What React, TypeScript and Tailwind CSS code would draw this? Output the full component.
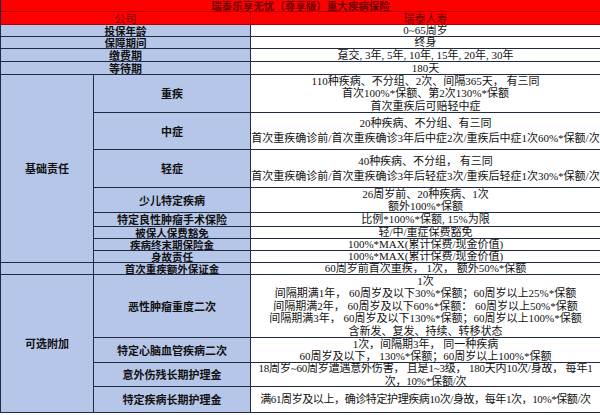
import React from "react";

const label = "flex items-center justify-center bg-[#b6c6e8] border-r border-b border-[#1f2a44] font-bold text-[11px] leading-[11px] text-[#111] whitespace-nowrap";
const small = "flex items-center justify-center bg-[#b6c6e8] border-r border-b border-[#1f2a44] font-bold text-[10.5px] leading-[10px] text-[#111] whitespace-nowrap";
const value = "flex flex-col items-center justify-center bg-white border-r border-b border-[#1f2a44] text-[11px] leading-[12.5px] text-[#111] whitespace-nowrap overflow-hidden text-center";
const serif = { fontFamily: '"Liberation Serif", "Noto Sans CJK SC", serif' };

function Val({ lines, className = "" }: { lines: string[]; className?: string }) {
  return (
    <div className={`${value} ${className}`} style={serif}>
      {lines.map((l, i) => (
        <span key={i}>{l}</span>
      ))}
    </div>
  );
}

export default function App() {
  return (
    <div className="w-[600px] h-[415px] bg-white" style={{ fontFamily: '"Noto Sans CJK SC", sans-serif' }}>
      <div className="grid grid-cols-[93px_157px_350px] grid-rows-[12px_13px_12px_12px_13px_13px_38px_37px_38px_25px_14px_12px_12px_12px_12px_63px_25px_24px_26px] border-l border-[#1f2a44]">
        {/* title */}
        <div className="col-span-3 flex items-center justify-center bg-[#ff0000] border-b border-r border-[#b00000] text-[10.5px] leading-[10px] font-bold text-[#6b0000]">
          瑞泰乐享无忧（尊享版）重大疾病保险
        </div>
        <div className="col-span-2 flex items-center justify-center bg-[#ff0000] border-b border-r border-[#b00000] text-[11px] leading-[11px] text-[#6b0000]">
          公司
        </div>
        <div className="flex items-center justify-center bg-[#ff0000] border-b border-r border-[#b00000] text-[11px] leading-[11px] text-[#6b0000]">
          瑞泰人寿
        </div>

        <div className={`col-span-2 ${small}`}>投保年龄</div>
        <Val className="leading-[10px]" lines={["0~65周岁"]} />
        <div className={`col-span-2 ${small}`}>保障期间</div>
        <Val className="leading-[10px]" lines={["终身"]} />
        <div className={`col-span-2 ${label}`}>缴费期</div>
        <Val className="leading-[11px]" lines={["趸交, 3年, 5年, 10年, 15年, 20年, 30年"]} />
        <div className={`col-span-2 ${label}`}>等待期</div>
        <Val className="leading-[11px]" lines={["180天"]} />

        {/* 基础责任 */}
        <div className={`row-span-8 ${label}`}>基础责任</div>
        <div className={label}>重疾</div>
        <Val lines={["110种疾病、不分组、2次、间隔365天， 有三同", "首次100%*保额、第2次130%*保额", "首次重疾后可赔轻中症"]} />
        <div className={label}>中症</div>
        <Val className="leading-[15px]" lines={["20种疾病、不分组、有三同", "首次重疾确诊前/首次重疾确诊3年后中症2次/重疾后中症1次60%*保额/次"]} />
        <div className={label}>轻症</div>
        <Val className="leading-[15px]" lines={["40种疾病、不分组， 有三同", "首次重疾确诊前/首次重疾确诊3年后轻症3次/重疾后轻症1次30%*保额/次"]} />
        <div className={label}>少儿特定疾病</div>
        <Val lines={["26周岁前、20种疾病、1次", "额外100%*保额"]} />
        <div className={label}>特定良性肿瘤手术保险</div>
        <Val className="leading-[11px]" lines={["比例*100%*保额, 15%为限"]} />
        <div className={small}>被保人保费豁免</div>
        <Val className="leading-[10px]" lines={["轻/中/重症保费豁免"]} />
        <div className={small}>疾病终末期保险金</div>
        <Val className="leading-[10px]" lines={["100%*MAX(累计保费/现金价值)"]} />
        <div className={small}>身故责任</div>
        <Val className="leading-[10px]" lines={["100%*MAX(累计保费/现金价值)"]} />

        <div className={label}></div>
        <div className={small}>首次重疾额外保证金</div>
        <Val className="leading-[10px]" lines={["60周岁前首次重疾， 1次， 额外50%*保额"]} />

        {/* 可选附加 */}
        <div className={`row-span-4 ${label}`}>可选附加</div>
        <div className={label}>恶性肿瘤重度二次</div>
        <Val
          lines={[
            "1次",
            "间隔期满1年， 60周岁及以下30%*保额；60周岁以上25%*保额",
            "间隔期满2年， 60周岁及以下60%*保额： 60周岁以上50%*保额",
            "间隔期满3年， 60周岁及以下130%*保额；60周岁以上100%*保额",
            "含新发、复发、持续、转移状态",
          ]}
        />
        <div className={label}>特定心脑血管疾病二次</div>
        <Val lines={["1次，间隔期3年， 同一种疾病", "60周岁及以下， 130%*保额；60周岁以上100%*保额"]} />
        <div className={label}>意外伤残长期护理金</div>
        <Val className="tracking-[-0.2px]" lines={["18周岁~60周岁遭遇意外伤害， 且是1~3级， 180天内10次/身故， 每年1", "次，10%*保额/次"]} />
        <div className={label}>特定疾病长期护理金</div>
        <Val className="tracking-[-0.4px]" lines={["满61周岁及以上，确诊特定护理疾病10次/身故，每年1次，10%*保额/次"]} />
      </div>
    </div>
  );
}
